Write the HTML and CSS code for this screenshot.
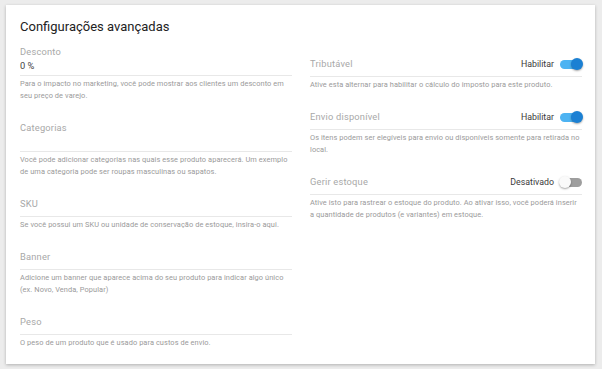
FILE: index.html
```html
<!DOCTYPE html>
<html lang="pt">
<head>
    <meta charset="UTF-8" />
    <title>Configurações avançadas</title>
    <link rel="stylesheet" href="styles.css">
</head>
<body>
<div class="card">
    <h2>Configurações avançadas</h2>

    <div class="cols">
        <div class="col">
            <div class="field">
                <div class="control filled">
                    <div class="label">Desconto</div>
                    <div class="value">0 %</div>
                </div>
                <div class="help">Para o impacto no marketing, você pode mostrar aos clientes um desconto em seu preço de varejo.</div>
            </div>
            <div class="field">
                <div class="control filled">
                    <div class="label">Categorias</div>
                    <div class="value"></div>
                </div>
                <div class="help">Você pode adicionar categorias nas quais esse produto aparecerá. Um exemplo de uma categoria pode ser roupas masculinas ou sapatos.</div>
            </div>
            <div class="field">
                <div class="control">
                    <div class="label">SKU</div>
                </div>
                <div class="help">Se você possui um SKU ou unidade de conservação de estoque, insira-o aqui.</div>
            </div>
            <div class="field">
                <div class="control">
                    <div class="label">Banner</div>
                </div>
                <div class="help">Adicione um banner que aparece acima do seu produto para indicar algo único (ex. Novo, Venda, Popular)</div>
            </div>
            <div class="field">
                <div class="control">
                    <div class="label">Peso</div>
                </div>
                <div class="help">O peso de um produto que é usado para custos de envio.</div>
            </div>
        </div>

        <div class="col right">
            <div class="field">
                <div class="control">
                    <div class="label">Tributável</div>
                    <div class="state">Habilitar <span class="switch on"></span></div>
                </div>
                <div class="help">Ative esta alternar para habilitar o cálculo do imposto para este produto.</div>
            </div>
            <div class="field">
                <div class="control">
                    <div class="label">Envio disponível</div>
                    <div class="state">Habilitar <span class="switch on"></span></div>
                </div>
                <div class="help">Os itens podem ser elegíveis para envio ou disponíveis somente para retirada no local.</div>
            </div>
            <div class="field">
                <div class="control">
                    <div class="label">Gerir estoque</div>
                    <div class="state">Desativado <span class="switch"></span></div>
                </div>
                <div class="help">Ative isto para rastrear o estoque do produto. Ao ativar isso, você poderá inserir a quantidade de produtos (e variantes) em estoque.</div>
            </div>
        </div>
    </div>
</div>
</body>
</html>
```

FILE: styles.css
```css
body {
    margin: 0;
    padding: 5px 7px 5px 6px;
    background: #ececec;
    font-family: Roboto, "Liberation Sans", sans-serif;
}
.card {
    background: #fff;
    height: 359px;
    box-sizing: border-box;
    padding: 13px 13px 0 14px;
    box-shadow: 0 1px 3px rgba(0,0,0,.25);
}
h2 {
    margin: 0;
    font-size: 13px;
    line-height: 18px;
    font-weight: 400;
    color: #222;
}
.cols {
    display: grid;
    grid-template-columns: 1fr 1fr;
    gap: 18px;
    margin-top: 9px;
}
.col.right { padding-top: 12px; }

.field { margin-bottom: 19px; }
.control {
    display: flex;
    align-items: center;
    justify-content: space-between;
    padding-bottom: 5px;
    border-bottom: 1px solid #e8e8e8;
}
.control.filled {
    display: block;
    padding-bottom: 2px;
}
.label {
    font-size: 9.3px;
    line-height: 14px;
    color: #a8a8a8;
    letter-spacing: .2px;
}
.value {
    height: 14px;
    font-size: 9.3px;
    line-height: 14px;
    color: #444;
}
.help {
    margin-top: 2px;
    font-size: 7.4px;
    line-height: 12px;
    letter-spacing: .08px;
    color: #9a9a9a;
}
.state {
    display: flex;
    align-items: center;
    gap: 6px;
    font-size: 8.8px;
    line-height: 14px;
    color: #3a3a3a;
}
.switch {
    position: relative;
    width: 22px;
    height: 9px;
    border-radius: 5px;
    background: #9e9e9e;
}
.switch::after {
    content: '';
    position: absolute;
    top: -2px;
    left: -1px;
    width: 12px;
    height: 12px;
    border-radius: 50%;
    background: #fafafa;
    box-shadow: 0 1px 2px rgba(0,0,0,.35);
}
.switch.on { background: #4db3f2; }
.switch.on::after {
    left: auto;
    right: -1px;
    background: #1b80d3;
}
```
